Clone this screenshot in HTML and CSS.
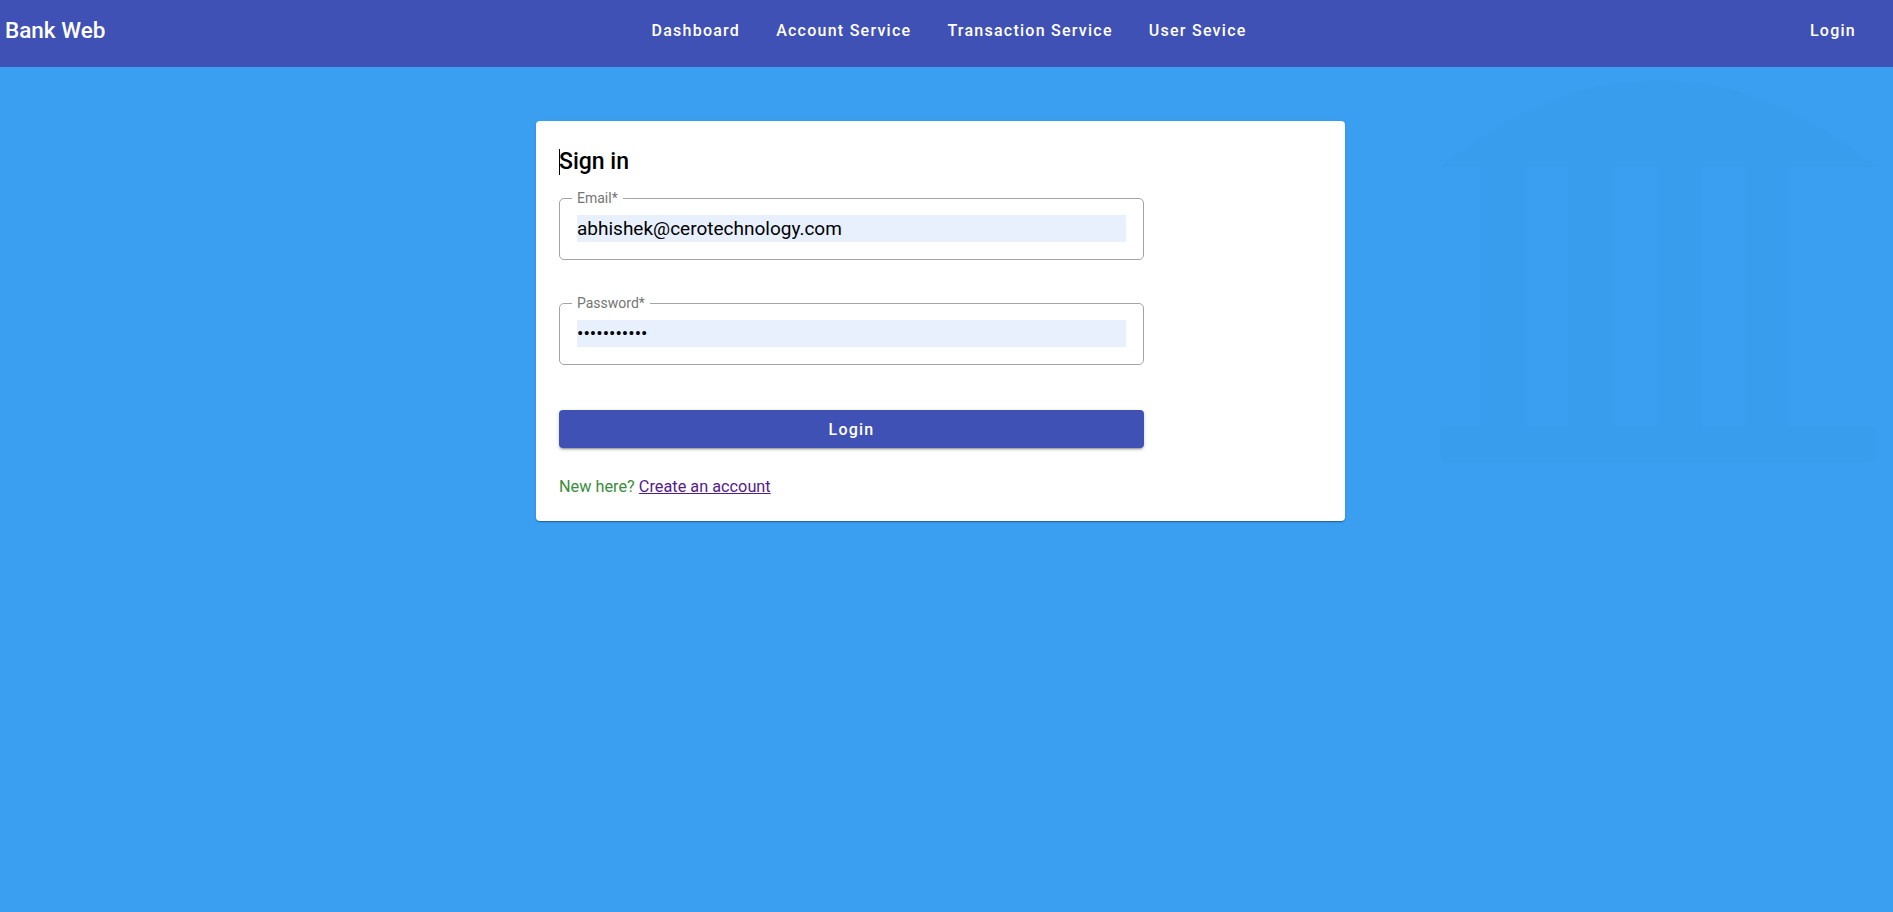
FILE: index.html
```html
<!DOCTYPE html>
<html lang="en">
<head>
<meta charset="utf-8">
<title>Bank Web</title>
<link rel="stylesheet" href="styles.css">
</head>
<body>
<svg class="watermark" viewBox="0 0 1893 912" width="1893" height="912" aria-hidden="true">
  <path d="M1440 167 Q1658 -7 1877 167 Z"/>
  <rect x="1480" y="167" width="47" height="260"/>
  <rect x="1568" y="167" width="45" height="260"/>
  <rect x="1657" y="167" width="45" height="260"/>
  <rect x="1745" y="167" width="43" height="260"/>
  <rect x="1440" y="427" width="437" height="36" rx="8"/>
</svg>
<header class="toolbar">
  <div class="brand">Bank Web</div>
  <nav class="nav">
    <a class="nav-btn" href="#">Dashboard</a>
    <a class="nav-btn" href="#">Account Service</a>
    <a class="nav-btn" href="#">Transaction Service</a>
    <a class="nav-btn" href="#">User Sevice</a>
  </nav>
  <div class="actions"><a class="nav-btn" href="#">Login</a></div>
</header>
<main class="page">
  <section class="card">
    <h1 class="card-title"><span class="caret"></span>Sign in</h1>
    <form class="form">
      <fieldset class="field">
        <legend class="field-label">Email*</legend>
        <input class="field-input" type="email" value="abhishek@cerotechnology.com">
      </fieldset>
      <fieldset class="field">
        <legend class="field-label">Password*</legend>
        <input class="field-input" type="password" value="abhishek123">
      </fieldset>
      <button class="submit" type="button">Login</button>
    </form>
    <p class="signup">New here? <a class="signup-link" href="#">Create an account</a></p>
  </section>
</main>
</body>
</html>
```
FILE: styles.css
```css
* { box-sizing: border-box; }

html, body {
  margin: 0;
  padding: 0;
}

body {
  min-height: 912px;
  background: #3a9ff0;
  font-family: Roboto, "Noto Sans", "Liberation Sans", sans-serif;
  position: relative;
  overflow: hidden;
}

.watermark {
  position: absolute;
  top: 0;
  left: 0;
  pointer-events: none;
  fill: #0a3d6b;
  opacity: 0.013;
}

.toolbar {
  position: relative;
  height: 67px;
  background: #3f51b5;
  color: #fff;
  display: grid;
  grid-template-columns: 1fr auto 1fr;
  align-items: center;
  padding: 0 0 6px 5px;
}

.brand {
  font-size: 22.5px;
  font-weight: 500;
  line-height: 32px;
  margin-top: -2px;
}

.nav {
  display: flex;
  gap: 4px;
}

.actions {
  justify-self: end;
  margin-right: 21px;
}

.nav-btn {
  color: #fff;
  text-decoration: none;
  font-size: 16px;
  font-weight: 500;
  letter-spacing: 1.25px;
  line-height: 36px;
  padding: 0 16px;
  display: inline-block;
}

.page {
  position: relative;
  padding: 54px 0 0 536px;
}

.card {
  width: 809px;
  height: 400px;
  background: #fff;
  border-radius: 4px;
  box-shadow: 0 2px 1px -1px rgba(0,0,0,.2), 0 1px 1px 0 rgba(0,0,0,.14), 0 1px 3px 0 rgba(0,0,0,.12);
  padding: 25px 23px 0;
}

.card-title {
  margin: 0;
  font-size: 23px;
  font-weight: 500;
  line-height: 32px;
  color: #000;
  position: relative;
}

.caret {
  display: inline-block;
  width: 1px;
  height: 26px;
  background: #000;
  vertical-align: -6px;
  margin-right: -1px;
}

.form {
  width: 585px;
  margin-top: 12px;
  display: flex;
  flex-direction: column;
}

.field {
  margin: 0 0 35px;
  border: 1px solid #a3a3a3;
  border-radius: 5px;
  padding: 9px 17px 17px;
  min-width: 0;
}

.field-label {
  font-size: 14px;
  line-height: 16px;
  color: #757575;
  padding: 0 5px;
  margin-left: -5px;
}

.field-input {
  display: block;
  width: 100%;
  height: 27px;
  border: 0;
  outline: none;
  padding: 0;
  margin: 0;
  background: #e8f0fe;
  font-family: Roboto, "Noto Sans", sans-serif;
  font-size: 19px;
  color: #000;
}

.submit {
  margin-top: 10px;
  height: 38px;
  border: 0;
  border-radius: 4px;
  background: #3f51b5;
  color: #fff;
  font-family: Roboto, "Noto Sans", sans-serif;
  font-size: 16px;
  font-weight: 500;
  letter-spacing: 1.25px;
  box-shadow: 0 3px 1px -2px rgba(0,0,0,.2), 0 2px 2px 0 rgba(0,0,0,.14), 0 1px 5px 0 rgba(0,0,0,.12);
}

.signup {
  margin: 29px 0 0;
  font-size: 16.3px;
  line-height: 19px;
  color: #388e3c;
}

.signup-link {
  color: #551a8b;
  text-decoration: underline;
}
```
